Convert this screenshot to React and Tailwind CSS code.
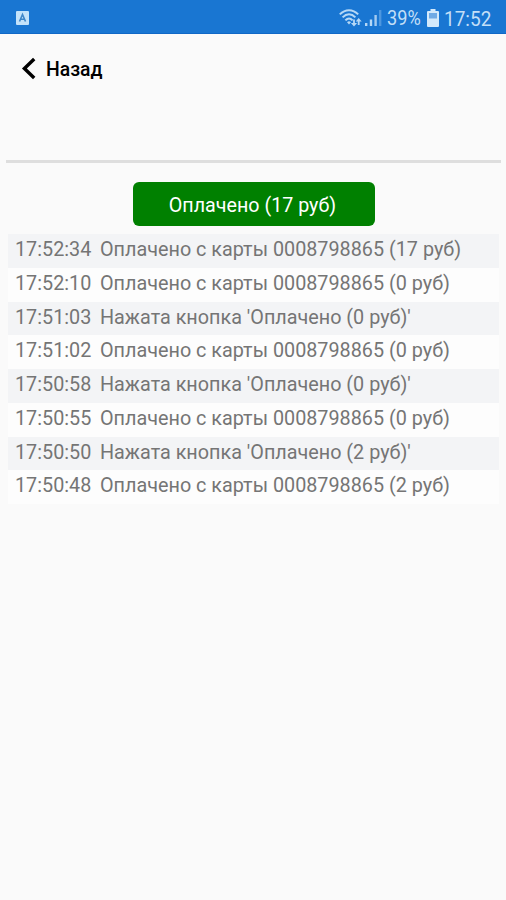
import { useState } from "react";

const events = [
  { time: "17:52:34", text: "Оплачено с карты 0008798865 (17 руб)" },
  { time: "17:52:10", text: "Оплачено с карты 0008798865 (0 руб)" },
  { time: "17:51:03", text: "Нажата кнопка 'Оплачено (0 руб)'" },
  { time: "17:51:02", text: "Оплачено с карты 0008798865 (0 руб)" },
  { time: "17:50:58", text: "Нажата кнопка 'Оплачено (0 руб)'" },
  { time: "17:50:55", text: "Оплачено с карты 0008798865 (0 руб)" },
  { time: "17:50:50", text: "Нажата кнопка 'Оплачено (2 руб)'" },
  { time: "17:50:48", text: "Оплачено с карты 0008798865 (2 руб)" },
];

const WifiIcon = () => (
  <svg width="24" height="19" viewBox="0 0 24 19" fill="none">
    <g stroke="#b5d8f6" strokeWidth="2">
      <path d="M.8 6.4C6.2 .8 13.8 .8 19.2 6.4" />
      <path d="M3.6 9.4C7.6 5.2 12.4 5.2 16.4 9.4" />
      <path d="M6.4 12.4C8.8 9.8 11.2 9.8 13.6 12.4" />
    </g>
    <path d="M8 14.2Q10 12.4 12 14.2L10 16.6Z" fill="#b5d8f6" />
    <g fill="#b5d8f6">
      <path d="M14.1 11.5h1.8v3.4h2.2L15 18.6L11.9 14.9h2.2z" />
      <path d="M18.8 17h1.8v-3.4h2.1L19.7 10L16.7 13.6h2.1z" />
    </g>
  </svg>
);

const SignalIcon = () => (
  <svg width="17" height="17" viewBox="0 0 17 17">
    <path d="M0 14h2.4v3H0zM4.8 10.5h2.4V17H4.8z" fill="#b5d8f6" />
    <path d="M9.4 6h2.4v11H9.4z" fill="#a3cbf0" />
    <path d="M14 1h2.4v16H14z" fill="#4d97df" />
  </svg>
);

const BatteryIcon = () => (
  <svg width="12" height="18" viewBox="0 0 12 18">
    <path d="M3.5 0h5v2H11q1 0 1 1v14q0 1-1 1H1q-1 0-1-1V3q0-1 1-1h2.5z" fill="#d3e9fb" />
    <path d="M2 4h8v5.5H2z" fill="#6faae5" />
  </svg>
);

const StatusBar = () => (
  <div className="flex h-[34px] items-center justify-between border-b border-[#1068c6] bg-[#1976d2] pt-0.5 pr-[15px] pl-4 text-[#c3dff7]">
    <svg width="13" height="14" viewBox="0 0 13 14">
      <rect width="13" height="14" rx="1" fill="#c3e2fa" />
      <path d="M3.5 10.5L6.5 3.5L9.5 10.5M4.6 8.3H8.4" fill="none" stroke="#3f87c9" strokeWidth="1.6" />
    </svg>
    <div className="flex items-center">
      <WifiIcon />
      <div className="ml-0.5">
        <SignalIcon />
      </div>
      <span className="ml-[5px] w-[35px] origin-left scale-x-[0.93] pt-0.5 text-[19.5px] leading-none whitespace-nowrap">39%</span>
      <div className="ml-[5px]">
        <BatteryIcon />
      </div>
      <span className="ml-[5px] w-[47px] origin-left scale-x-[0.95] pt-0.5 text-[20px] leading-none whitespace-nowrap">17:52</span>
    </div>
  </div>
);

const App = () => {
  const [log] = useState(events);

  return (
    <div className="h-[900px] w-full overflow-hidden bg-[#fafafa] font-['Roboto',sans-serif]">
      <StatusBar />

      <div className="mr-[5px] ml-1.5 h-[129px] border-b-[3px] border-[#dedede] pt-[21px]">
        <button type="button" className="flex h-7 items-center pl-[15px] text-black">
          <svg width="16" height="24" viewBox="0 0 16 24" fill="none" stroke="currentColor" strokeWidth="3.4">
            <path d="M13.2 2L3.4 11.5L13.2 21" />
          </svg>
          <span className="ml-[9px] pt-0.5 text-[19.4px] font-medium">Назад</span>
        </button>
      </div>

      <div className="flex justify-center pt-[19px] pl-px">
        <button
          type="button"
          className="h-11 w-[242px] rounded-md bg-[#008000] pt-1 pr-0.5 text-[19.7px] text-white"
        >
          Оплачено (17 руб)
        </button>
      </div>

      <div className="mt-2 mr-[7px] ml-2">
        {log.map((item) => (
          <div
            key={item.time}
            className="flex h-[33.75px] items-center bg-[#fdfdfd] pb-[2px] pl-[7px] text-[19.8px] whitespace-nowrap text-[#757575] odd:bg-[#f3f4f6]"
          >
            <span className="w-[85px]">{item.time}</span>
            <span>{item.text}</span>
          </div>
        ))}
      </div>
    </div>
  );
};

export default App;
